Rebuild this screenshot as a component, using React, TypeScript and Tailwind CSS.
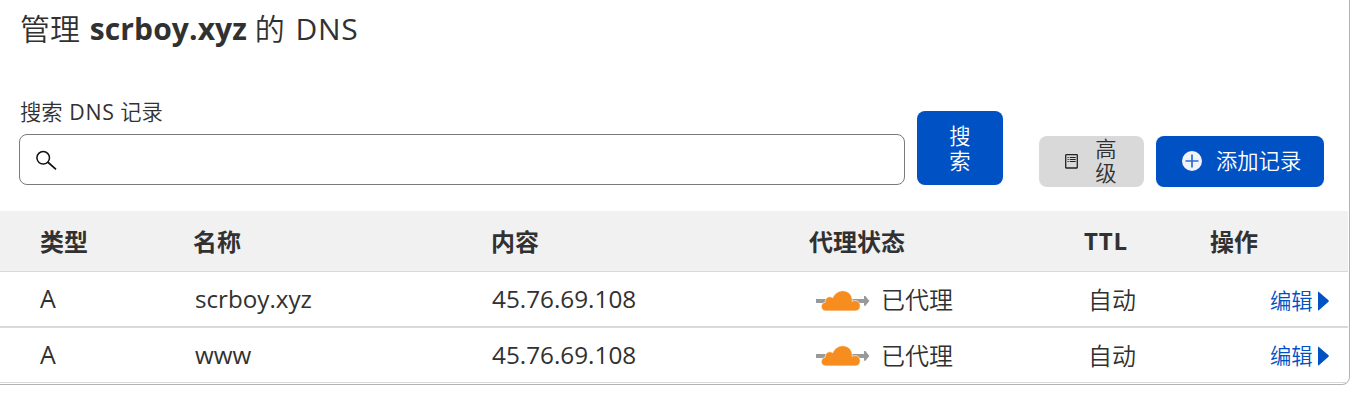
type DnsRecord = { type: string; name: string; content: string };

const records: DnsRecord[] = [
  { type: "A", name: "scrboy.xyz", content: "45.76.69.108" },
  { type: "A", name: "www", content: "45.76.69.108" },
];

const columns = "grid grid-cols-[154px_298px_318px_275px_125px_178px]";

function ProxyCloud() {
  return (
    <svg width="54" height="22" viewBox="0 0 54 22" className="mt-[3px] block shrink-0 group-last:mt-0.5">
      <path d="M0 8.900h48V6h1.400l4 4.900-4 4.900H48v-2.900H0z" fill="#999999" />
      <path
        d="M9.600 20.900c-2.500 0-4.300-1.900-4.300-4.300 0-2.200 1.500-3.900 3.800-4.300.1-3.300 2-5.500 4.600-5.500 1.200 0 2.200.3 3 1C18.500 3.800 22.200.8 26.800.8c5.200 0 9 3.700 9.400 8.700.1.700 0 1.400-.1 2 .7-.7 1.700-1 2.800-1 3.200 0 5.300 2.300 5.300 5.200 0 2.900-1.700 5.200-4.700 5.200z"
        fill="#f78c1f"
        stroke="#ffffff"
        strokeWidth="0.6"
      />
    </svg>
  );
}

export default function App() {
  return (
    <div className="h-[402px] overflow-hidden bg-white font-['Open_Sans','Noto_Sans_CJK_SC',sans-serif] text-[#313131]">
      <main className="h-[385px] w-[1350px] rounded-br-lg border-r border-b border-[#b3b3b3]">
        <h1 className="h-[98px] pt-[9px] pl-5 text-[30px] leading-10 font-[350] whitespace-nowrap">
          管理 <strong className="ml-0.5 font-bold tracking-[0.1px]">scrboy.xyz</strong> 的{" "}
          <span className="ml-[3px] font-normal tracking-[0.7px]">DNS</span>
        </h1>

        <div className="flex h-[113px] pl-[19px]">
          <label className="block w-[886px]">
            <span className="block h-9 pl-px text-[21.3px] leading-7 font-[350]">
              搜索 <span className="ml-px font-normal tracking-[0.8px]">DNS</span> 记录
            </span>
            <span className="flex h-[51px] items-center rounded-lg border border-[#7a7a7a] pl-4">
              <svg width="21" height="20" viewBox="0 0 21 20" fill="none" stroke="#111111" strokeWidth="1.5">
                <circle cx="7.200" cy="7.800" r="6.300" />
                <path d="M11.700 12 20 19.300" strokeWidth="1.700" />
              </svg>
              <input aria-label="搜索" className="min-w-0 flex-1 bg-transparent pl-3 outline-none" />
            </span>
          </label>
          <button className="mt-[13px] ml-3 flex h-[74px] w-[86px] items-center justify-center rounded-lg bg-[#0051c3] text-[21.3px] leading-[25px] font-[350] text-white">
            <span className="w-[22px]">搜索</span>
          </button>
          <button className="mt-[38px] ml-9 flex h-[51px] w-[105px] items-center rounded-lg bg-[#d9d9d9] pl-[26px] text-[21.3px] leading-[24px] font-[350]">
            <svg width="13" height="15" viewBox="0 0 13 15" fill="none" stroke="#222222" className="shrink-0">
              <rect x="0.700" y="0.700" width="11.600" height="13.300" rx="0.500" strokeWidth="1.300" />
              <path d="M2.500 3.500h1.200M4.700 3.500h6M2.500 5.500h1.200M4.700 5.500h6M2.500 7.500h1.200M4.700 7.500h6" strokeWidth="1.100" />
            </svg>
            <span className="mb-px ml-[17px] w-[22px]">高级</span>
          </button>
          <button className="mt-[38px] ml-3 flex h-[51px] w-[168px] items-center rounded-lg bg-[#0051c3] pl-[26px] text-[21.3px] leading-[25px] font-[350] whitespace-nowrap text-white">
            <svg width="20" height="20" viewBox="0 0 20 20" className="mb-px shrink-0">
              <circle cx="10" cy="10" r="10" fill="#f1f3f8" />
              <path d="M10 3.500v13M3.500 10h13" stroke="#2b6bd0" strokeWidth="1.700" />
            </svg>
            <span className="mb-0.5 ml-3.5">添加记录</span>
          </button>
        </div>

        <div className="w-[1348px] text-2xl whitespace-nowrap">
          <div className={`${columns} h-[61px] items-center border-b border-[#d9d9d9] bg-[#f1f1f1] pt-0.5 pl-10 leading-8 font-bold`}>
            <span>类型</span>
            <span className="-ml-px">名称</span>
            <span className="-ml-px">内容</span>
            <span className="-ml-px">代理状态</span>
            <span className="-ml-px pb-0.5 tracking-[0.9px]">TTL</span>
            <span>操作</span>
          </div>
          {records.map((record) => (
            <div
              key={record.name}
              className={`${columns} group h-14 items-center border-b-2 border-[#d9d9d9] pl-10 leading-8 last:h-[55px] last:border-b`}
            >
              <span className="pb-0.5 text-[25px]">{record.type}</span>
              <span className="pl-px text-[24.200px]">{record.name}</span>
              <span className="text-[24.300px]">{record.content}</span>
              <span className="flex items-center pl-1.5">
                <ProxyCloud />
                <span className="mt-0.5 ml-[11px] font-[350]">已代理</span>
              </span>
              <span className="pt-0.5 pl-[3px] font-[350]">自动</span>
              <a className="flex items-center pt-[3px] pl-[60px] text-[21.3px] font-[350] text-[#0051c3] group-last:pt-px">
                编辑
                <svg width="11" height="20" viewBox="0 0 11 20" className="ml-[5px]">
                  <path d="M0 1.200Q0 .2.900.9L10.500 9.300Q11 10 10.500 10.700L.9 19.200Q0 19.800 0 18.800z" fill="#0051c3" />
                </svg>
              </a>
            </div>
          ))}
        </div>
      </main>
    </div>
  );
}
